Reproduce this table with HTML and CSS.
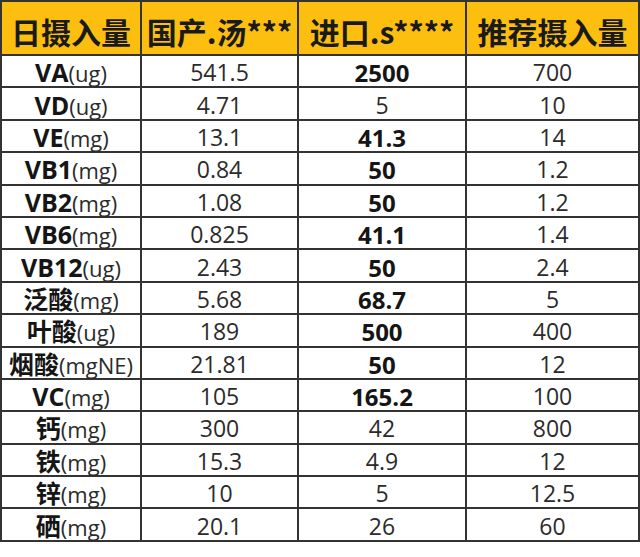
FILE: index.html
```html
<!DOCTYPE html>
<html lang="zh-CN">
<head>
<meta charset="utf-8">
<title>日摄入量</title>
<link rel="stylesheet" href="styles.css">
</head>
<body>
<table class="nutri">
  <colgroup>
    <col class="c1"><col class="c2"><col class="c3"><col class="c4">
  </colgroup>
  <thead>
    <tr class="head">
      <th>日摄入量</th>
      <th>国产.汤***</th>
      <th>进口.s****</th>
      <th>推荐摄入量</th>
    </tr>
  </thead>
  <tbody>
    <tr><td class="name"><b>VA</b><span class="unit">(ug)</span></td><td>541.5</td><td class="hi">2500</td><td>700</td></tr>
    <tr><td class="name"><b>VD</b><span class="unit">(ug)</span></td><td>4.71</td><td>5</td><td>10</td></tr>
    <tr><td class="name"><b>VE</b><span class="unit">(mg)</span></td><td>13.1</td><td class="hi">41.3</td><td>14</td></tr>
    <tr><td class="name"><b>VB1</b><span class="unit">(mg)</span></td><td>0.84</td><td class="hi">50</td><td>1.2</td></tr>
    <tr><td class="name"><b>VB2</b><span class="unit">(mg)</span></td><td>1.08</td><td class="hi">50</td><td>1.2</td></tr>
    <tr><td class="name"><b>VB6</b><span class="unit">(mg)</span></td><td>0.825</td><td class="hi">41.1</td><td>1.4</td></tr>
    <tr><td class="name"><b>VB12</b><span class="unit">(ug)</span></td><td>2.43</td><td class="hi">50</td><td>2.4</td></tr>
    <tr><td class="name"><b>泛酸</b><span class="unit">(mg)</span></td><td>5.68</td><td class="hi">68.7</td><td>5</td></tr>
    <tr><td class="name"><b>叶酸</b><span class="unit">(ug)</span></td><td>189</td><td class="hi">500</td><td>400</td></tr>
    <tr><td class="name"><b>烟酸</b><span class="unit">(mgNE)</span></td><td>21.81</td><td class="hi">50</td><td>12</td></tr>
    <tr><td class="name"><b>VC</b><span class="unit">(mg)</span></td><td>105</td><td class="hi">165.2</td><td>100</td></tr>
    <tr><td class="name"><b>钙</b><span class="unit">(mg)</span></td><td>300</td><td>42</td><td>800</td></tr>
    <tr><td class="name"><b>铁</b><span class="unit">(mg)</span></td><td>15.3</td><td>4.9</td><td>12</td></tr>
    <tr><td class="name"><b>锌</b><span class="unit">(mg)</span></td><td>10</td><td>5</td><td>12.5</td></tr>
    <tr><td class="name"><b>硒</b><span class="unit">(mg)</span></td><td>20.1</td><td>26</td><td>60</td></tr>
  </tbody>
</table>
</body>
</html>
```
FILE: styles.css
```css
html, body {
  margin: 0;
  padding: 0;
  background: #ffffff;
}

.nutri {
  border-collapse: collapse;
  table-layout: fixed;
  width: 638px;
  font-family: "Open Sans", "Noto Sans CJK SC", sans-serif;
  color: #2b2b2b;
}

.c1 { width: 140px; }
.c2 { width: 157px; }
.c3 { width: 168px; }
.c4 { width: 173px; }

.nutri th,
.nutri td {
  border: 2px solid #333333;
  text-align: center;
  white-space: nowrap;
}

.nutri tr.head {
  height: 54px;
}

.nutri th {
  background: #fdbf0f;
  font-family: "Noto Sans CJK SC", sans-serif;
  font-weight: 700;
  font-size: 30px;
  line-height: 44px;
  color: #1a1a1a;
  padding: 6px 0 0 0;
}

.nutri tbody tr {
  height: 32.4px;
}

.nutri td {
  font-size: 23px;
  line-height: 27px;
  padding: 3px 0 0 0;
}

.nutri td.hi {
  font-weight: 700;
  font-size: 24px;
  color: #151515;
}

.nutri td.name {
  line-height: 26px;
}

.nutri td.name b {
  font-weight: 700;
  font-size: 25px;
  line-height: 26px;
  color: #151515;
}

.nutri td.name .unit {
  font-size: 22px;
  line-height: 26px;
}
```
